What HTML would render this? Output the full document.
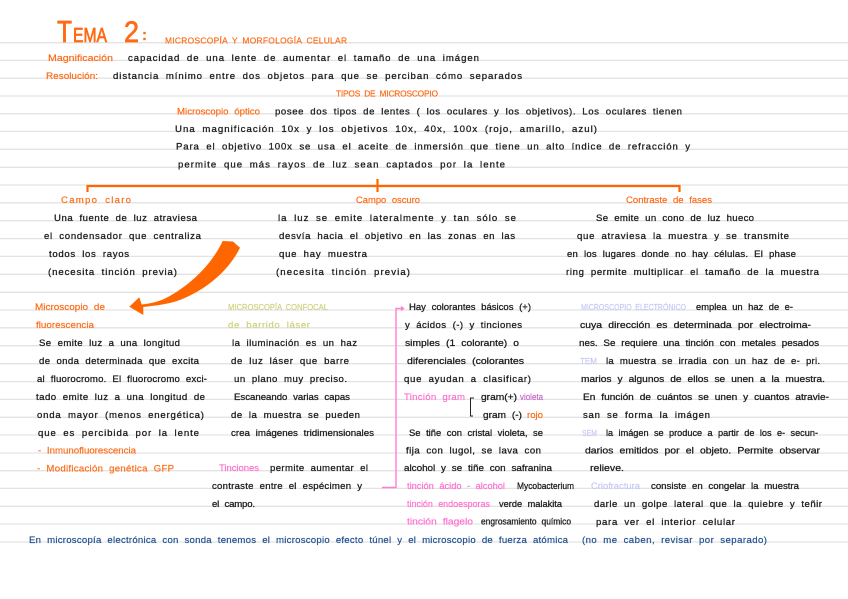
<!DOCTYPE html>
<html lang="es"><head><meta charset="utf-8"><title>Tema 2</title>
<style>
html,body{margin:0;padding:0;background:#fff;width:848px;height:599px;overflow:hidden}
svg{display:block;position:absolute;left:0;top:0;filter:blur(.3px)}
text{font-family:"Liberation Sans",sans-serif;font-size:9.6px;word-spacing:3px;fill:#1c1c1c;stroke:#1c1c1c;stroke-width:.28}
.o{fill:#ff6a14;stroke:#ff6a14;stroke-width:.18}
.p{fill:#ff6fd0;stroke:#ff6fd0;stroke-width:.18}
.l{fill:#c6c8f6;stroke:#c6c8f6;stroke-width:.18}
.y{fill:#cdd27e;stroke:#cdd27e;stroke-width:.18}
.v{fill:#c766c9;stroke:#c766c9;stroke-width:.18}
.n{fill:#1f4f8f;stroke:#1f4f8f;stroke-width:.18}
.c{font-size:8.4px;word-spacing:2px}
</style></head><body>
<svg width="848" height="599" viewBox="0 0 848 599" xmlns="http://www.w3.org/2000/svg">
<g stroke="#e3e3e3" stroke-width="1.3">
<path d="M0 42.7H848M0 60.4H848M0 78.2H848M0 96H848M0 113.8H848M0 131.4H848M0 149.3H848M0 167.3H848M0 185H848M0 202.8H848M0 220.7H848M0 238.6H848M0 256.4H848M0 274.3H848M0 292.3H848M0 310H848M0 327.8H848M0 345.7H848M0 363.7H848M0 381.6H848M0 399.4H848M0 417.3H848M0 435H848M0 453H848M0 470.7H848M0 488.4H848M0 506.3H848M0 524H848M0 542H848"/>
</g>

<text class="o" x="57" y="42" style="font-size:31px;stroke-width:.7" textLength="15" lengthAdjust="spacingAndGlyphs">T</text>
<text class="o" x="73" y="42" style="font-size:20px;stroke-width:.7" textLength="34" lengthAdjust="spacingAndGlyphs">EMA</text>
<text class="o" x="124" y="42" style="font-size:30px;stroke-width:.7" textLength="15" lengthAdjust="spacingAndGlyphs">2</text>
<text class="o" x="142" y="40" style="font-size:16px;font-weight:bold" textLength="5" lengthAdjust="spacingAndGlyphs">:</text>
<text class="o c" x="165" y="43.5" textLength="182">MICROSCOPÍA Y MORFOLOGÍA CELULAR</text>

<text class="o" x="48" y="61" textLength="65" lengthAdjust="spacingAndGlyphs">Magnificación</text>
<text x="128" y="61" textLength="351">capacidad de una lente de aumentar el tamaño de una imágen</text>
<text class="o" x="46" y="79" textLength="52" lengthAdjust="spacingAndGlyphs">Resolución:</text>
<text x="113" y="79" textLength="409">distancia mínimo entre dos objetos para que se perciban cómo separados</text>
<text class="o c" x="336" y="96.5" textLength="102">TIPOS DE MICROSCOPIO</text>
<text class="o" x="177" y="114.5" textLength="83" lengthAdjust="spacingAndGlyphs">Microscopio óptico</text>
<text x="275" y="114.5" textLength="407">posee dos tipos de lentes ( los oculares y los objetivos). Los oculares tienen</text>
<text x="175" y="132" textLength="422">Una magnificación 10x y los objetivos 10x, 40x, 100x (rojo, amarillo, azul)</text>
<text x="176" y="149.5" textLength="514">Para el objetivo 100x se usa el aceite de inmersión que tiene un alto índice de refracción y</text>
<text x="178" y="167.5" textLength="327">permite que más rayos de luz sean captados por la lente</text>

<path d="M87.500 192V186H679.500V192M377.500 179V192" fill="none" stroke="#ff6600" stroke-width="2.2"/>

<text class="o" x="61" y="203" textLength="70">Campo claro</text>
<text class="o" x="356" y="203" textLength="64" lengthAdjust="spacingAndGlyphs">Campo oscuro</text>
<text class="o" x="626" y="203" textLength="86" lengthAdjust="spacingAndGlyphs">Contraste de fases</text>

<text x="54" y="221" textLength="143">Una fuente de luz atraviesa</text>
<text x="44" y="239" textLength="157">el condensador que centraliza</text>
<text x="49" y="257" textLength="80">todos los rayos</text>
<text x="48" y="275" textLength="129">(necesita tinción previa)</text>

<text x="278" y="221" textLength="238">la luz se emite lateralmente y tan sólo se</text>
<text x="279" y="239" textLength="236">desvía hacia el objetivo en las zonas en las</text>
<text x="279" y="257" textLength="88">que hay muestra</text>
<text x="276" y="275" textLength="134">(necesita tinción previa)</text>

<text x="596" y="221" textLength="158">Se emite un cono de luz hueco</text>
<text x="577" y="239" textLength="212">que atraviesa la muestra y se transmite</text>
<text x="567" y="257" textLength="229">en los lugares donde no hay células. El phase</text>
<text x="566" y="275" textLength="253">ring permite multiplicar el tamaño de la muestra</text>

<path d="M222.700 241L233 241.500L240 247.700C230 268 210 288 180 300C168 304.500 155 305.500 143.300 307L143.300 315L129.300 306.700L139.300 297.300L141.700 304.500C150 303.500 155 302.500 163 299.500C185 289 210 268 222.700 241Z" fill="#ff6600"/>

<text class="o" x="35" y="310" textLength="70" lengthAdjust="spacingAndGlyphs">Microscopio de</text>
<text class="o" x="36" y="328" textLength="58" lengthAdjust="spacingAndGlyphs">fluorescencia</text>
<text x="39" y="346" textLength="141">Se emite luz a una longitud</text>
<text x="39" y="364" textLength="160">de onda determinada que excita</text>
<text x="37" y="382" textLength="170">al fluorocromo. El fluorocromo exci-</text>
<text x="36" y="400" textLength="169">tado emite luz a una longitud de</text>
<text x="37" y="418" textLength="167">onda mayor (menos energética)</text>
<text x="38" y="436" textLength="161">que es percibida por la lente</text>
<text class="o" x="38" y="453.500" textLength="98" lengthAdjust="spacingAndGlyphs">- Inmunofluorescencia</text>
<text class="o" x="37" y="471.500" textLength="137">- Modificación genética GFP</text>

<text class="y c" x="228" y="310" textLength="100" lengthAdjust="spacingAndGlyphs">MICROSCOPÍA CONFOCAL</text>
<text class="y" x="228" y="328" textLength="82">de barrido láser</text>
<text x="232" y="346" textLength="125">la iluminación es un haz</text>
<text x="231" y="364" textLength="118">de luz láser que barre</text>
<text x="234" y="382" textLength="113">un plano muy preciso.</text>
<text x="234" y="400" textLength="116" lengthAdjust="spacingAndGlyphs">Escaneando varias capas</text>
<text x="231" y="418" textLength="129">de la muestra se pueden</text>
<text x="231" y="436" textLength="143" lengthAdjust="spacingAndGlyphs">crea imágenes tridimensionales</text>
<text class="p" x="219" y="471" textLength="40">Tinciones</text>
<text x="270" y="471" textLength="98">permite aumentar el</text>
<text x="212" y="489" textLength="150">contraste entre el espécimen y</text>
<text x="212" y="507" textLength="43">el campo.</text>

<path d="M382 487.500H396V308.500H403M401 306.500L403.500 308.500L401 310.500" fill="none" stroke="#ff80d2" stroke-width="1.4"/>

<text x="409" y="310" textLength="122" lengthAdjust="spacingAndGlyphs">Hay colorantes básicos (+)</text>
<text x="405" y="328" textLength="117">y ácidos (-) y tinciones</text>
<text x="405" y="346" textLength="114" lengthAdjust="spacingAndGlyphs">simples (1 colorante) o</text>
<text x="407" y="364" textLength="117" lengthAdjust="spacingAndGlyphs">diferenciales (colorantes</text>
<text x="404" y="382" textLength="127">que ayudan a clasificar)</text>
<text class="p" x="404" y="400" textLength="61">Tinción gram</text>
<text x="481" y="400" textLength="36" lengthAdjust="spacingAndGlyphs">gram(+)</text>
<text class="v" x="520" y="400" textLength="23" lengthAdjust="spacingAndGlyphs">violeta</text>
<path d="M474 398H470.500V416H473" fill="none" stroke="#222" stroke-width="1"/>
<text x="483" y="418" textLength="39" lengthAdjust="spacingAndGlyphs">gram (-)</text>
<text class="o" x="527" y="418" textLength="16" lengthAdjust="spacingAndGlyphs">rojo</text>
<text x="409" y="436" textLength="134" lengthAdjust="spacingAndGlyphs">Se tiñe con cristal violeta, se</text>
<text x="406" y="453.500" textLength="135">fija con lugol, se lava con</text>
<text x="404" y="471" textLength="148" lengthAdjust="spacingAndGlyphs">alcohol y se tiñe con safranina</text>
<text class="p" x="407" y="489" textLength="98" lengthAdjust="spacingAndGlyphs">tinción ácido - alcohol</text>
<text x="517" y="489" textLength="57" lengthAdjust="spacingAndGlyphs">Mycobacterium</text>
<text class="p" x="407" y="507" textLength="83" lengthAdjust="spacingAndGlyphs">tinción endoesporas</text>
<text x="499" y="507" textLength="63" lengthAdjust="spacingAndGlyphs">verde malakita</text>
<text class="p" x="407" y="524.500" textLength="66" lengthAdjust="spacingAndGlyphs">tinción flagelo</text>
<text x="481" y="524.500" textLength="90" lengthAdjust="spacingAndGlyphs">engrosamiento químico</text>

<text class="l c" x="581" y="310" textLength="105" lengthAdjust="spacingAndGlyphs">MICROSCOPIO ELECTRÓNICO</text>
<text x="696" y="310" textLength="97" lengthAdjust="spacingAndGlyphs">emplea un haz de e-</text>
<text x="580" y="328" textLength="231" lengthAdjust="spacingAndGlyphs">cuya dirección es determinada por electroima-</text>
<text x="579" y="346" textLength="240" lengthAdjust="spacingAndGlyphs">nes. Se requiere una tinción con metales pesados</text>
<text class="l c" x="580" y="364" textLength="17" lengthAdjust="spacingAndGlyphs">TEM</text>
<text x="606" y="364" textLength="214">la muestra se irradia con un haz de e- pri.</text>
<text x="581" y="382" textLength="244" lengthAdjust="spacingAndGlyphs">marios y algunos de ellos se unen a la muestra.</text>
<text x="583" y="400" textLength="246" lengthAdjust="spacingAndGlyphs">En función de cuántos se unen y cuantos atravie-</text>
<text x="583" y="418" textLength="127">san se forma la imágen</text>
<text class="l c" x="582" y="436" textLength="15" lengthAdjust="spacingAndGlyphs">SEM</text>
<text x="606" y="436" textLength="212" lengthAdjust="spacingAndGlyphs">la imágen se produce a partir de los e- secun-</text>
<text x="585" y="453.500" textLength="235" lengthAdjust="spacingAndGlyphs">darios emitidos por el objeto. Permite observar</text>
<text x="590" y="471" textLength="34" lengthAdjust="spacingAndGlyphs">relieve.</text>
<text class="l" x="591" y="489" textLength="49" lengthAdjust="spacingAndGlyphs">Criofractura</text>
<text x="651" y="489" textLength="148" lengthAdjust="spacingAndGlyphs">consiste en congelar la muestra</text>
<text x="594" y="507" textLength="228">darle un golpe lateral que la quiebre y teñir</text>
<text x="596" y="525" textLength="139">para ver el interior celular</text>

<text class="n" x="29" y="543" textLength="539">En microscopía electrónica con sonda tenemos el microscopio efecto túnel y el microscopio de fuerza atómica</text>
<text class="n" x="582" y="543" textLength="185">(no me caben, revisar por separado)</text>
</svg>
</body></html>
